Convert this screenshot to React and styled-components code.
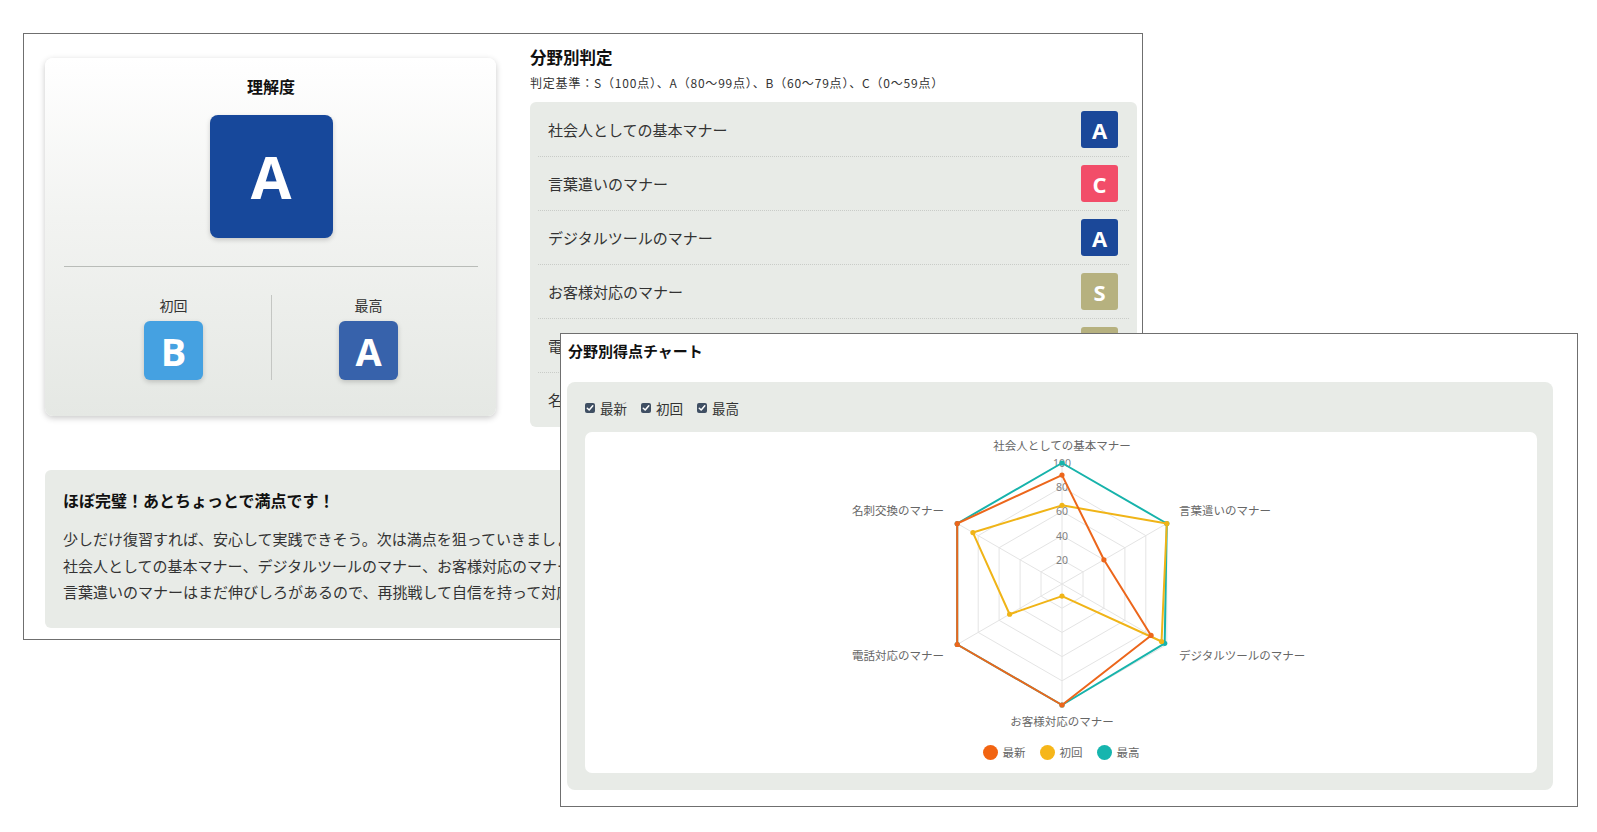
import React from "react";
import styled, { createGlobalStyle } from "styled-components";

const GlobalStyle = createGlobalStyle`
  * { box-sizing: border-box; }
  body {
    margin: 0;
    background: #fff;
    font-family: "Noto Sans CJK JP", "Noto Sans", sans-serif;
    color: #333;
  }
`;

const gradeColors = {
    S: "#b6b17f",
    A: "#1b4899",
    B: "#45a1e1",
    C: "#f24d69",
};

const fields = [
    { name: "社会人としての基本マナー", grade: "A" },
    { name: "言葉遣いのマナー", grade: "C" },
    { name: "デジタルツールのマナー", grade: "A" },
    { name: "お客様対応のマナー", grade: "S" },
    { name: "電話対応のマナー", grade: "S" },
    { name: "名刺交換のマナー", grade: "S" },
];

const series = [
    { key: "best", label: "最高", color: "#17b3ab", values: [100, 100, 98, 100, 100, 100] },
    { key: "first", label: "初回", color: "#f0b417", values: [65, 100, 95, 10, 50, 85] },
    { key: "latest", label: "最新", color: "#ec661b", values: [90, 40, 85, 100, 100, 100] },
];

const legend = [
    { label: "最新", color: "#f26411" },
    { label: "初回", color: "#f6b619" },
    { label: "最高", color: "#16b5ae" },
];

export default function App() {
    return (
        <>
            <GlobalStyle />
            <Desk>
                <Window $x={23} $y={33} $w={1120} $h={607}>
                    <ResultWindow>
                        <TopRow>
                            <ScoreCard>
                                <CardTitle>理解度</CardTitle>
                                <Badge $size={123} $font={59} $radius={8} $color="#17489b">
                                    A
                                </Badge>
                                <Divider />
                                <HistoryRow>
                                    <HistoryCol>
                                        <HistoryLabel>初回</HistoryLabel>
                                        <Badge $size={59} $font={38} $radius={6} $color="#45a1e1">
                                            B
                                        </Badge>
                                    </HistoryCol>
                                    <VLine />
                                    <HistoryCol>
                                        <HistoryLabel>最高</HistoryLabel>
                                        <Badge $size={59} $font={38} $radius={6} $color="#3762ab">
                                            A
                                        </Badge>
                                    </HistoryCol>
                                </HistoryRow>
                            </ScoreCard>
                            <FieldColumn>
                                <SectionTitle>分野別判定</SectionTitle>
                                <Criteria>
                                    判定基準：S（100点）、A（80〜99点）、B（60〜79点）、C（0〜59点）
                                </Criteria>
                                <FieldList>
                                    {fields.map((f) => (
                                        <FieldRow key={f.name}>
                                            <span>{f.name}</span>
                                            <Badge
                                                $size={37}
                                                $font={22}
                                                $radius={3}
                                                $color={gradeColors[f.grade]}
                                                $flat
                                            >
                                                {f.grade}
                                            </Badge>
                                        </FieldRow>
                                    ))}
                                </FieldList>
                            </FieldColumn>
                        </TopRow>
                        <Message>
                            <MessageTitle>ほぼ完璧！あとちょっとで満点です！</MessageTitle>
                            <MessageText>
                                <p>少しだけ復習すれば、安心して実践できそう。次は満点を狙っていきましょう！</p>
                                <p>
                                    社会人としての基本マナー、デジタルツールのマナー、お客様対応のマナー、電話対応のマナー、名刺交換のマナーはバッチリです。
                                </p>
                                <p>
                                    言葉遣いのマナーはまだ伸びしろがあるので、再挑戦して自信を持って対応できるようにしましょう。
                                </p>
                            </MessageText>
                        </Message>
                    </ResultWindow>
                </Window>

                <Window $x={560} $y={333} $w={1018} $h={474} $top>
                    <ChartWindow>
                        <ChartTitle>分野別得点チャート</ChartTitle>
                        <ChartPanel>
                            <Toggles>
                                {["最新", "初回", "最高"].map((t) => (
                                    <Toggle key={t}>
                                        <CheckBox>
                                            <svg width="8" height="8" viewBox="0 0 8 8">
                                                <path
                                                    d="M1.3 4.2 L3.2 6 L6.8 1.8"
                                                    fill="none"
                                                    stroke="#fff"
                                                    strokeWidth="1.5"
                                                    strokeLinecap="round"
                                                    strokeLinejoin="round"
                                                />
                                            </svg>
                                        </CheckBox>
                                        {t}
                                    </Toggle>
                                ))}
                            </Toggles>
                            <ChartCanvas>
                                <Radar />
                                <Legend>
                                    {legend.map((l) => (
                                        <LegendItem key={l.label}>
                                            <LegendDot $color={l.color} />
                                            {l.label}
                                        </LegendItem>
                                    ))}
                                </Legend>
                            </ChartCanvas>
                        </ChartPanel>
                    </ChartWindow>
                </Window>
            </Desk>
        </>
    );
}

const CX = 477;
const CY = 152;
const R = 121;

function point(i, v) {
    const a = ((-90 + 60 * i) * Math.PI) / 180;
    return [CX + (R * v) / 100 * Math.cos(a), CY + (R * v) / 100 * Math.sin(a)];
}

const ring = (v) =>
    [0, 1, 2, 3, 4, 5].map((i) => point(i, v).map((n) => n.toFixed(1)).join(",")).join(" ");

const pointLabels = [
    { x: 477, y: 13, anchor: "middle" },
    { x: 594, y: 78, anchor: "start" },
    { x: 594, y: 223, anchor: "start" },
    { x: 477, y: 289, anchor: "middle" },
    { x: 359, y: 223, anchor: "end" },
    { x: 359, y: 78, anchor: "end" },
];

function Radar() {
    return (
        <svg width="952" height="306" viewBox="0 0 952 306">
            {[20, 40, 60, 80, 100].map((v) => (
                <polygon key={v} points={ring(v)} fill="none" stroke="#e4e4e4" strokeWidth="1" />
            ))}
            {[0, 1, 2, 3, 4, 5].map((i) => {
                const [x, y] = point(i, 100);
                return <line key={i} x1={CX} y1={CY} x2={x} y2={y} stroke="#e4e4e4" strokeWidth="1" />;
            })}
            {[20, 40, 60, 80, 100].map((v) => (
                <text
                    key={v}
                    x={CX}
                    y={CY - (R * v) / 100}
                    textAnchor="middle"
                    dominantBaseline="central"
                    fontSize="10.5"
                    fill="#808080"
                    fontFamily='"Noto Sans", sans-serif'
                >
                    {v}
                </text>
            ))}
            {series.map((s) => {
                const pts = s.values.map((v, i) => point(i, v));
                return (
                    <g key={s.key}>
                        <polygon
                            points={pts.map((p) => p.join(",")).join(" ")}
                            fill="none"
                            stroke={s.color}
                            strokeWidth="2"
                            strokeLinejoin="round"
                        />
                        {pts.map(([x, y], i) => (
                            <circle key={i} cx={x} cy={y} r="2.6" fill={s.color} />
                        ))}
                    </g>
                );
            })}
            {fields.map((f, i) => (
                <text
                    key={f.name}
                    x={pointLabels[i].x}
                    y={pointLabels[i].y}
                    textAnchor={pointLabels[i].anchor}
                    dominantBaseline="central"
                    fontSize="11.5"
                    fill="#666"
                    fontFamily='"Noto Sans CJK JP", sans-serif'
                >
                    {f.name}
                </text>
            ))}
        </svg>
    );
}

const Desk = styled.main`
    position: relative;
    width: 1597px;
    height: 832px;
    overflow: hidden;
    background: #fff;
`;

const Window = styled.section`
    position: absolute;
    left: ${(p) => p.$x}px;
    top: ${(p) => p.$y}px;
    width: ${(p) => p.$w}px;
    height: ${(p) => p.$h}px;
    z-index: ${(p) => (p.$top ? 2 : 1)};
    background: #fff;
    border: 1px solid #6f6f6f;
    overflow: hidden;
`;

const ResultWindow = styled.div`
    padding: 11px 5px 0 21px;
`;

const TopRow = styled.div`
    display: flex;
    align-items: flex-start;
`;

const ScoreCard = styled.div`
    flex: 0 0 451px;
    margin-top: 13px;
    height: 358px;
    padding: 17px 18px 0 19px;
    border-radius: 8px;
    background: linear-gradient(180deg, #ffffff 0%, #f2f3f1 45%, #e5e8e4 100%);
    box-shadow: 0 2px 6px rgba(0, 0, 0, 0.22);
    display: flex;
    flex-direction: column;
    align-items: center;
`;

const CardTitle = styled.h2`
    margin: 0;
    font-size: 16px;
    line-height: 22px;
    font-weight: 700;
    color: #111;
`;

const Badge = styled.div`
    flex: 0 0 auto;
    width: ${(p) => p.$size}px;
    height: ${(p) => p.$size}px;
    border-radius: ${(p) => p.$radius}px;
    background: ${(p) => p.$color};
    color: #fff;
    display: flex;
    align-items: center;
    justify-content: center;
    font-family: "Open Sans", "DejaVu Sans", sans-serif;
    font-weight: 700;
    font-size: ${(p) => p.$font}px;
    line-height: 1;
    box-shadow: ${(p) => (p.$flat ? "none" : "0 2px 5px rgba(0, 0, 0, 0.18)")};
    ${CardTitle} + & {
        margin-top: 18px;
    }
`;

const Divider = styled.hr`
    align-self: stretch;
    margin: 28px 0 0;
    border: none;
    border-top: 1px solid #b9bcb8;
`;

const HistoryRow = styled.div`
    align-self: stretch;
    display: flex;
    justify-content: center;
    margin-top: 28px;
`;

const HistoryCol = styled.div`
    flex: 0 0 194px;
    display: flex;
    flex-direction: column;
    align-items: center;
    gap: 6px;
`;

const HistoryLabel = styled.div`
    font-size: 14px;
    line-height: 20px;
    color: #333;
`;

const VLine = styled.div`
    width: 1px;
    background: #c4c6c3;
`;

const FieldColumn = styled.div`
    flex: 1;
    margin-left: 34px;
`;

const SectionTitle = styled.h2`
    margin: 0;
    font-size: 16.5px;
    line-height: 24px;
    font-weight: 700;
    color: #111;
`;

const Criteria = styled.div`
    margin-top: 5px;
    font-size: 12px;
    line-height: 18px;
    letter-spacing: 0.8px;
    color: #333;
`;

const FieldList = styled.div`
    margin-top: 10px;
    padding: 1px 8px;
    border-radius: 6px;
    background: #e8ebe7;
`;

const FieldRow = styled.div`
    height: 53px;
    display: flex;
    align-items: center;
    justify-content: space-between;
    padding: 0 11px 0 10px;
    font-size: 15px;
    color: #333;
    & + & {
        height: 54px;
        border-top: 1px dotted #c9ccc8;
    }
`;

const Message = styled.div`
    margin: 43px 0 0;
    padding: 18px 18px 22px;
    border-radius: 6px;
    background: #e8ebe7;
`;

const MessageTitle = styled.h3`
    margin: 0;
    font-size: 16px;
    line-height: 24px;
    font-weight: 700;
    color: #111;
`;

const MessageText = styled.div`
    margin-top: 14px;
    font-size: 15px;
    line-height: 26.5px;
    color: #333;
    white-space: nowrap;
    p {
        margin: 0;
    }
`;

const ChartWindow = styled.div`
    padding: 6px 24px 0 6px;
`;

const ChartTitle = styled.h2`
    margin: 0 0 0 1px;
    font-size: 15px;
    line-height: 22px;
    font-weight: 700;
    color: #111;
`;

const ChartPanel = styled.div`
    margin-top: 20px;
    height: 408px;
    padding: 17px 16px 17px 18px;
    border-radius: 8px;
    background: #e8ebe7;
    display: flex;
    flex-direction: column;
`;

const Toggles = styled.div`
    display: flex;
    gap: 14px;
    height: 18px;
    align-items: center;
`;

const Toggle = styled.label`
    display: flex;
    align-items: center;
    gap: 5px;
    font-size: 13.5px;
    color: #333;
`;

const CheckBox = styled.span`
    width: 10px;
    height: 10px;
    border-radius: 2px;
    background: #3f4f63;
    display: flex;
    align-items: center;
    justify-content: center;
`;

const ChartCanvas = styled.div`
    margin-top: 15px;
    flex: 1;
    border-radius: 7px;
    background: #fff;
    display: flex;
    flex-direction: column;
    align-items: center;
`;

const Legend = styled.div`
    display: flex;
    gap: 14px;
    height: 28px;
    align-items: center;
`;

const LegendItem = styled.div`
    display: flex;
    align-items: center;
    gap: 5px;
    font-size: 11.5px;
    color: #666;
`;

const LegendDot = styled.span`
    width: 15px;
    height: 15px;
    border-radius: 50%;
    background: ${(p) => p.$color};
`;
